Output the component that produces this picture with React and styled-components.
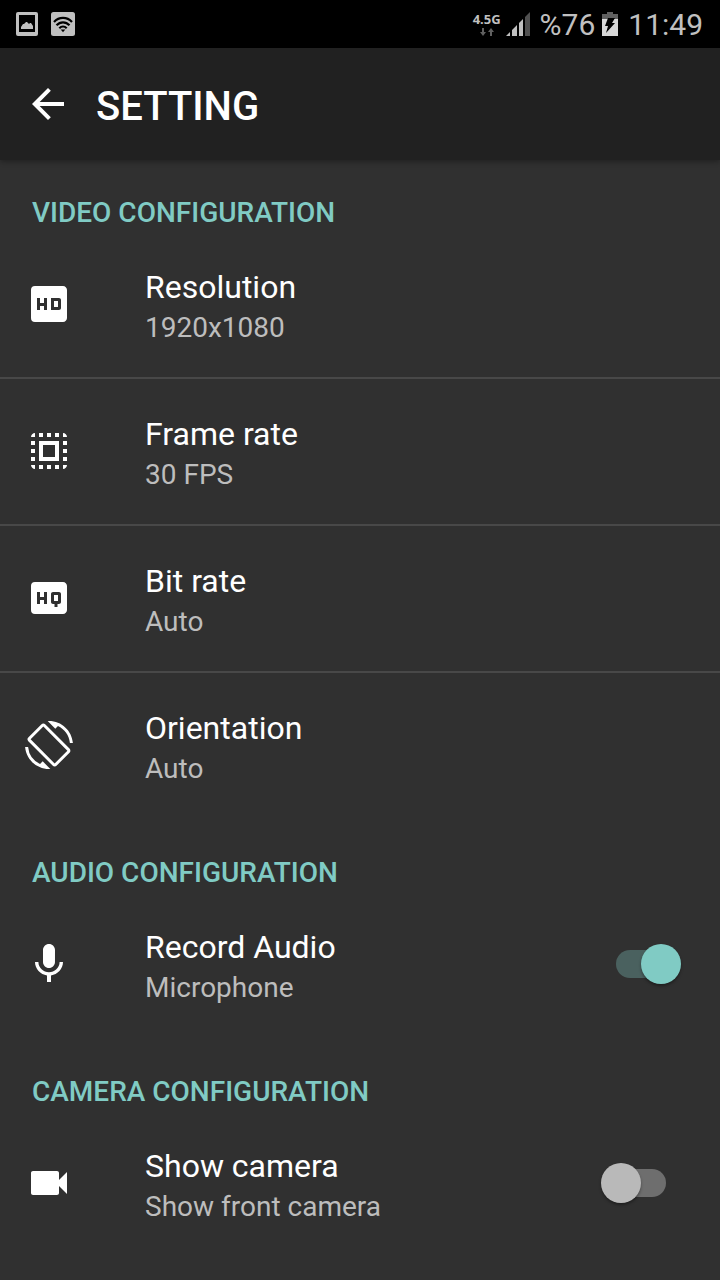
import React, { useState } from "react";
import styled, { createGlobalStyle } from "styled-components";
import {
  MdArrowBack,
  MdHd,
  MdHighQuality,
  MdMic,
  MdScreenRotation,
  MdSelectAll,
  MdVideocam,
} from "react-icons/md";

const GlobalStyle = createGlobalStyle`
  *, *::before, *::after { box-sizing: border-box; }
  body {
    margin: 0;
    background: #303030;
    color: #fff;
    font-family: Roboto, "Liberation Sans", sans-serif;
  }
`;

const Page = styled.div`
  min-height: 100vh;
  background: #303030;
`;

const StatusBar = styled.div`
  display: flex;
  align-items: center;
  justify-content: space-between;
  height: 48px;
  padding: 0 17px 0 16px;
  background: #000;
  color: #c0c0c0;
`;

const StatusGroup = styled.div`
  display: flex;
  align-items: center;
  gap: ${({ $gap }) => $gap}px;
  svg { display: block; }
`;

const Network = styled.div`
  display: flex;
  flex-direction: column;
  align-items: center;
  gap: 2px;
  margin-right: 5px;
  font: 700 13px/14px "Noto Sans", sans-serif;
`;

const StatusText = styled.span`
  padding-top: 2px;
  font-size: 30px;
  line-height: 46px;
`;

const AppBar = styled.header`
  position: relative;
  display: flex;
  align-items: center;
  gap: 24px;
  height: 112px;
  padding: 0 24px;
  background: #212121;
  box-shadow: 0 2px 5px rgba(0, 0, 0, 0.3);
`;

const BackButton = styled.button`
  display: flex;
  padding: 0;
  border: 0;
  background: none;
  color: inherit;
  cursor: pointer;
`;

const Title = styled.h1`
  margin: 0;
  padding-top: 6px;
  font-size: 40px;
  font-weight: 500;
  line-height: 48px;
`;

const SectionTitle = styled.h2`
  margin: 0;
  padding: 36px 32px 2px;
  color: #80cbc4;
  font-size: 28px;
  font-weight: 500;
  line-height: 34px;
`;

const List = styled.ul`
  margin: 0;
  padding: 0;
  list-style: none;
`;

const Item = styled.li`
  border-bottom: 2px solid #484848;
  &:last-child { border-color: transparent; }
`;

const Row = styled.label`
  display: flex;
  align-items: center;
  gap: 72px;
  width: 100%;
  height: 145px;
  padding: 0 39px 1px 25px;
  border: 0;
  background: none;
  color: inherit;
  font: inherit;
  text-align: left;
  cursor: pointer;
  svg { flex: none; }
`;

const RowText = styled.span`
  display: flex;
  flex: 1;
  flex-direction: column;
  padding-top: 8px;
`;

const Name = styled.span`
  font-size: 32px;
  line-height: 40px;
`;

const Value = styled.span`
  color: #bdbdbd;
  font-size: 28px;
  line-height: 42px;
`;

const Switch = styled.input`
  appearance: none;
  display: flex;
  align-items: center;
  flex: none;
  width: 80px;
  height: 40px;
  margin: 0;
  cursor: pointer;
  &::before {
    content: "";
    width: 50px;
    height: 28px;
    margin-left: 15px;
    border-radius: 14px;
    background: #6e6e6e;
  }
  &::after {
    content: "";
    width: 40px;
    height: 40px;
    margin-left: -65px;
    border-radius: 50%;
    background: #b9b9b9;
    box-shadow: 0 2px 3px rgba(0, 0, 0, 0.35);
  }
  &:checked::before { background: #4a615f; }
  &:checked::after {
    margin-left: -25px;
    background: #80cbc4;
  }
`;

function PictureIcon() {
  return (
    <svg width="22" height="24" viewBox="0 0 22 24" aria-hidden="true">
      <path fill="currentColor" fillRule="evenodd" d="M2 0h18a2 2 0 0 1 2 2v20a2 2 0 0 1-2 2H2a2 2 0 0 1-2-2V2a2 2 0 0 1 2-2zM3 3v17h16V3z" />
      <path fill="currentColor" d="M5 17v-2l2-3h1l2-2h1l2 2 1-1h1l2 3v3z" />
    </svg>
  );
}

function WifiIcon() {
  return (
    <svg width="24" height="24" viewBox="0 0 24 24" aria-hidden="true">
      <rect width="24" height="24" rx="2.5" fill="currentColor" />
      <g fill="none" stroke="#000" strokeWidth="2.2">
        <path d="M3 10c5-5.500 13-5.500 18 0" />
        <path d="M5.500 13.300c3.700-4 9.300-4 13 0" />
        <path d="M8.300 16.300c2.200-2.200 5.200-2.200 7.400 0" />
      </g>
      <path d="M9.700 17.500h4.600L12 20.200z" />
    </svg>
  );
}

function DataArrows() {
  return (
    <svg width="14" height="8" viewBox="0 0 14 8" fill="#606060" aria-hidden="true">
      <path d="M2 0h2v4h2L3 8 0 4h2zM10 8h2V4h2l-3-4-3 4h2z" />
    </svg>
  );
}

function SignalIcon() {
  return (
    <svg width="24" height="24" viewBox="0 0 24 24" aria-hidden="true">
      <path fill="currentColor" d="M0 24l4-4v4zM6 18l5-5v11H6zM13 11l4-4v17h-4z" />
      <path fill="#505050" d="M19 5l5-5v24h-5z" />
    </svg>
  );
}

function BatteryIcon() {
  return (
    <svg width="16" height="24" viewBox="0 0 16 24" aria-hidden="true">
      <path fill="#606060" d="M5 0h6v2h5v5H0V2h5z" />
      <path fill="#d8d8d8" d="M0 7h16v17H0z" />
      <path d="M6 6h7l-3 5h3L4 21l2-7H3z" />
    </svg>
  );
}

const videoSettings = [
  { icon: MdHd, name: "Resolution", value: "1920x1080" },
  { icon: MdSelectAll, name: "Frame rate", value: "30 FPS" },
  { icon: MdHighQuality, name: "Bit rate", value: "Auto" },
  { icon: MdScreenRotation, name: "Orientation", value: "Auto" },
];

function RowContent({ icon: Icon, name, value }) {
  return (
    <>
      <Icon size={48} aria-hidden="true" />
      <RowText>
        <Name>{name}</Name>
        <Value>{value}</Value>
      </RowText>
    </>
  );
}

function Setting(props) {
  return (
    <Item>
      <Row as="button" type="button">
        <RowContent {...props} />
      </Row>
    </Item>
  );
}

function ToggleSetting({ initial, ...props }) {
  const [on, setOn] = useState(initial);
  return (
    <Item>
      <Row>
        <RowContent {...props} />
        <Switch type="checkbox" role="switch" checked={on} onChange={(e) => setOn(e.target.checked)} />
      </Row>
    </Item>
  );
}

export default function App() {
  return (
    <Page>
      <GlobalStyle />
      <StatusBar>
        <StatusGroup $gap={13}>
          <PictureIcon />
          <WifiIcon />
        </StatusGroup>
        <StatusGroup $gap={0}>
          <Network>
            <span>4.5G</span>
            <DataArrows />
          </Network>
          <StatusGroup $gap={10}>
            <SignalIcon />
            <StatusGroup $gap={7}>
              <StatusText>%76</StatusText>
              <BatteryIcon />
            </StatusGroup>
            <StatusText>11:49</StatusText>
          </StatusGroup>
        </StatusGroup>
      </StatusBar>
      <AppBar>
        <BackButton type="button" aria-label="Back">
          <MdArrowBack size={48} />
        </BackButton>
        <Title>SETTING</Title>
      </AppBar>
      <main>
        <SectionTitle>VIDEO CONFIGURATION</SectionTitle>
        <List>
          {videoSettings.map((s) => (
            <Setting key={s.name} {...s} />
          ))}
        </List>
        <SectionTitle>AUDIO CONFIGURATION</SectionTitle>
        <List>
          <ToggleSetting icon={MdMic} name="Record Audio" value="Microphone" initial={true} />
        </List>
        <SectionTitle>CAMERA CONFIGURATION</SectionTitle>
        <List>
          <ToggleSetting icon={MdVideocam} name="Show camera" value="Show front camera" initial={false} />
        </List>
      </main>
    </Page>
  );
}
